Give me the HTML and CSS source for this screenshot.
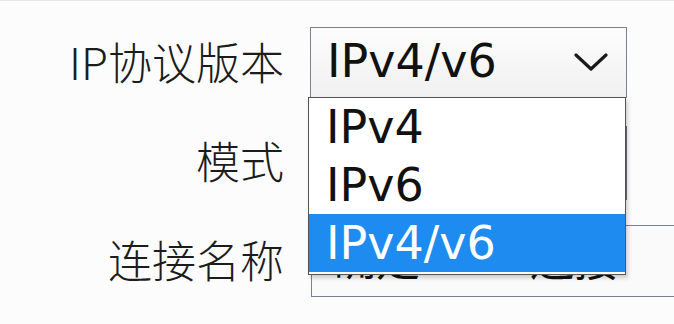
FILE: index.html
```html
<!DOCTYPE html>
<html lang="zh-CN">
<head>
<meta charset="utf-8">
<link rel="stylesheet" href="styles.css">
</head>
<body>
<div class="form">
  <div class="label">IP协议版本</div>
  <div class="cell">
    <div class="select">
      <span class="value">IPv4/v6</span>
      <svg class="chev" width="34" height="20" viewBox="0 0 34 20"><polyline points="2,3 17,17 32,3" fill="none" stroke="#1a1a1a" stroke-width="3.2" stroke-linecap="round" stroke-linejoin="round"/></svg>
    </div>
    <ul class="menu">
      <li class="item">IPv4</li>
      <li class="item">IPv6</li>
      <li class="item active">IPv4/v6</li>
    </ul>
  </div>
  <div class="label">模式</div>
  <div class="cell">
    <div class="box"></div>
  </div>
  <div class="label">连接名称</div>
  <div class="cell">
    <div class="box wide"><span class="t1">确定</span><span class="t2">连接</span></div>
  </div>
</div>
</body>
</html>
```
FILE: styles.css
```css
html, body {
  margin: 0;
  padding: 0;
  background: #fcfcfd;
  overflow: hidden;
  width: 674px;
  height: 324px;
}
body {
  border-top: 1px solid #e6e6e6;
  box-sizing: border-box;
}
.form {
  display: grid;
  grid-template-columns: 284px 1fr;
  grid-auto-rows: 71px;
  row-gap: 28px;
  column-gap: 26px;
  padding-top: 26px;
}
.label {
  font-family: "Noto Sans CJK SC", sans-serif;
  font-weight: 300;
  font-size: 44px;
  color: #1c1c1c;
  text-align: right;
  display: flex;
  align-items: center;
  justify-content: flex-end;
  padding-bottom: 4px;
}
.cell {
  position: relative;
}
.select {
  box-sizing: border-box;
  width: 317px;
  height: 71px;
  border: 1px solid #7d7f98;
  background: linear-gradient(#fdfdfd, #f0f0f0);
  display: flex;
  align-items: center;
  justify-content: space-between;
  padding: 0 18px 0 16px;
}
.value, .item {
  font-family: "DejaVu Sans", "Noto Sans CJK SC", sans-serif;
  font-size: 46px;
  color: #111;
}
.value {
  padding-bottom: 4px;
}
.chev {
  display: block;
  margin-top: -2px;
}
.box {
  box-sizing: border-box;
  width: 317px;
  height: 74px;
  border: 1px solid #6c6e84;
  border-left-color: #9a9cb0;
  background: #f7f7f8;
}
.box.wide {
  width: 420px;
  height: 72px;
  margin-left: 1px;
  border-color: #7d7f98;
  background: #fafafb;
  font-family: "Noto Sans CJK SC", sans-serif;
  font-size: 44px;
  color: #111;
  display: flex;
  align-items: center;
  padding: 0 0 8px 20px;
  gap: 110px;
}
.menu {
  position: absolute;
  left: -2px;
  top: 70px;
  width: 318px;
  margin: 0;
  padding: 0 0 2px 0;
  list-style: none;
  box-sizing: border-box;
  border: 1px solid #555;
  background: #fff;
  box-shadow: 2px 3px 4px rgba(0,0,0,0.18);
  z-index: 2;
}
.item {
  height: 58px;
  line-height: 58px;
  padding-left: 17px;
}
.item.active {
  background: #1e8bf0;
  color: #fff;
}
```
